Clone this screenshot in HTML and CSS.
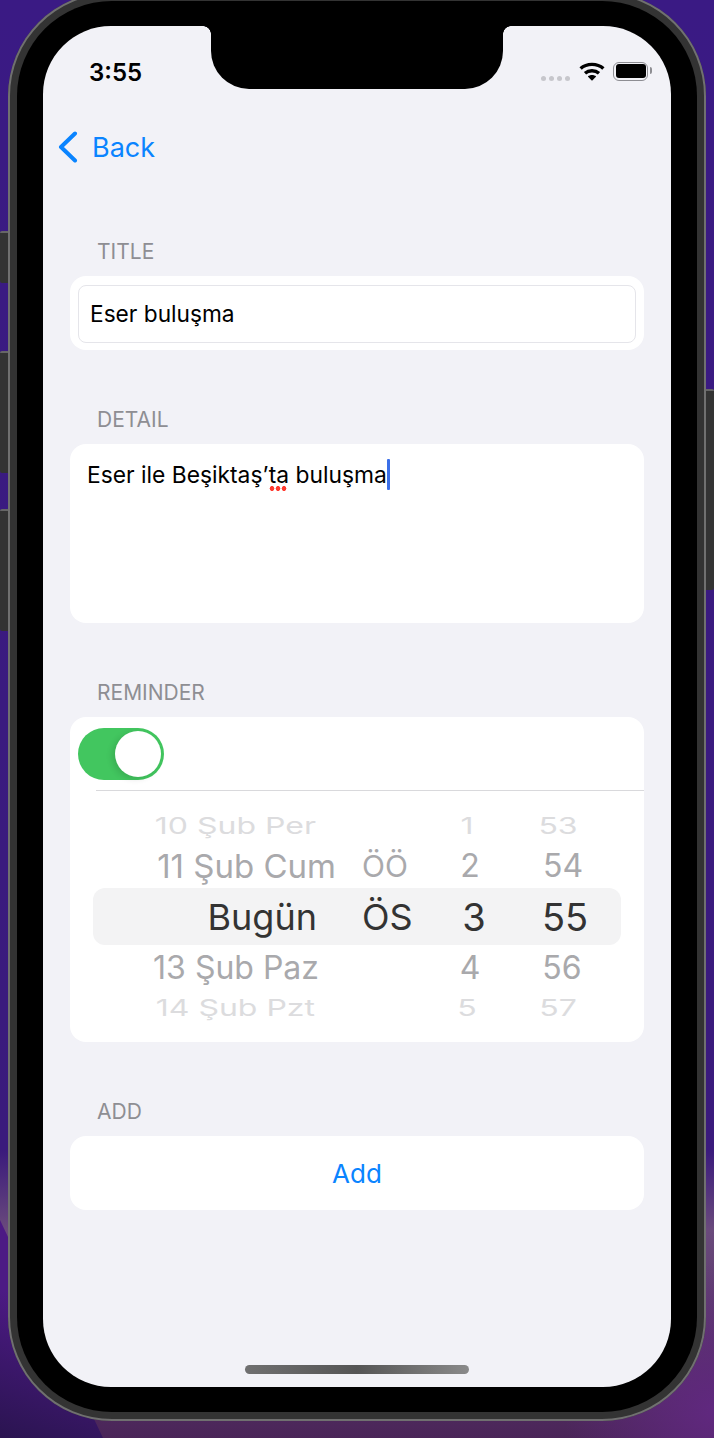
FILE: index.html
```html
<!DOCTYPE html>
<html lang="en">
<head>
    <meta charset="UTF-8">
    <meta name="viewport" content="width=device-width, initial-scale=1.0">
    <title>Add Reminder</title>
    <link rel="stylesheet" href="styles.css">
</head>
<body>
    <div class="phone">
        <span class="side-btn side-btn-mute"></span>
        <span class="side-btn side-btn-up"></span>
        <span class="side-btn side-btn-down"></span>
        <span class="side-btn side-btn-power"></span>
        <div class="bezel">
            <div class="screen">
                <div class="notch"></div>

                <div class="status">
                    <span class="time">3:55</span>
                    <div class="status-icons">
                        <span class="cell"><i></i><i></i><i></i><i></i></span>
                        <svg class="wifi" width="26" height="19" viewBox="0 0 26 19">
                            <path d="M1.6 6.6C7.8 1 18.2 1 24.4 6.6" fill="none" stroke="#000" stroke-width="3.4"/>
                            <path d="M6 11.2C9.8 7.9 16.2 7.9 20 11.2" fill="none" stroke="#000" stroke-width="3.4"/>
                            <path d="M8.8 14.4C11 12.4 15 12.4 17.2 14.4L13 18.8Z" fill="#000"/>
                        </svg>
                        <span class="battery"><i></i></span>
                    </div>
                </div>

                <div class="nav">
                    <svg class="chevron" width="20" height="32" viewBox="0 0 20 32">
                        <path d="M17 2.5L3 16L17 29.5" fill="none" stroke="#0a84ff" stroke-width="4" stroke-linecap="round" stroke-linejoin="round"/>
                    </svg>
                    <span class="back">Back</span>
                </div>

                <div class="form">
                    <div class="section">
                        <div class="label">TITLE</div>
                        <div class="card card-title">
                            <div class="input">Eser buluşma</div>
                        </div>
                    </div>

                    <div class="section">
                        <div class="label">DETAIL</div>
                        <div class="card card-detail">
                            <span class="detail-text">Eser ile Beşiktaş’<span class="misspelled">ta</span> buluşma</span><span class="caret"></span>
                        </div>
                    </div>

                    <div class="section">
                        <div class="label">REMINDER</div>
                        <div class="card card-reminder">
                            <div class="toggle"><span class="thumb"></span></div>
                            <div class="separator"></div>
                            <div class="picker">
                                <div class="picker-band"></div>
                                <div class="row row-far row-top"><span class="c-date">10 Şub Per</span><span class="c-ampm"></span><span class="c-hour">1</span><span class="c-min">53</span></div>
                                <div class="row row-near row-above"><span class="c-date">11 Şub Cum</span><span class="c-ampm">ÖÖ</span><span class="c-hour">2</span><span class="c-min">54</span></div>
                                <div class="row row-selected"><span class="c-date">Bugün</span><span class="c-ampm">ÖS</span><span class="c-hour">3</span><span class="c-min">55</span></div>
                                <div class="row row-near row-below"><span class="c-date">13 Şub Paz</span><span class="c-ampm"></span><span class="c-hour">4</span><span class="c-min">56</span></div>
                                <div class="row row-far row-bottom"><span class="c-date">14 Şub Pzt</span><span class="c-ampm"></span><span class="c-hour">5</span><span class="c-min">57</span></div>
                            </div>
                        </div>
                    </div>

                    <div class="section">
                        <div class="label">ADD</div>
                        <div class="card card-add">Add</div>
                    </div>
                </div>

                <div class="home-indicator"></div>
            </div>
        </div>
    </div>
</body>
</html>
```

FILE: styles.css
```css
html, body {
    margin: 0;
    height: 1438px;
    overflow: hidden;
}
body {
    font-family: Inter, "Liberation Sans", sans-serif;
    position: relative;
    background:
        radial-gradient(circle at 714px 1410px, #60287f 0, rgba(96, 40, 127, 0) 150px),
        linear-gradient(180deg, #3a1a84 0, #3a1a7c 1150px, #6a4a7c 1230px, #4a2558 1438px);
}
/* darker wallpaper wedge in the bottom left corner */
body::before {
    content: "";
    position: absolute;
    inset: 0;
    background: linear-gradient(20deg, #2a1450 0, #4c1a84 140px, #4c1a84 100%);
    clip-path: polygon(0 1220px, 103px 1438px, 0 1438px);
}

.phone {
    position: relative;
    box-sizing: border-box;
    width: 698px;
    height: 1429px;
    margin: -8px 0 0 8px;
    padding: 9px;
    border-radius: 104px;
    background: #333;
    box-shadow: inset 0 0 0 2px #707070;
}
.side-btn {
    position: absolute;
    left: -8px;
    width: 8px;
    background: #333;
    border-top: 2px solid #666;
    border-radius: 2px 0 0 2px;
    box-sizing: border-box;
}
.side-btn-mute { top: 239px; height: 52px; }
.side-btn-up { top: 359px; height: 122px; }
.side-btn-down { top: 517px; height: 122px; }
.side-btn-power {
    left: auto;
    right: -8px;
    top: 397px;
    height: 201px;
    border-radius: 0 2px 2px 0;
}

.bezel {
    box-sizing: border-box;
    height: 100%;
    padding: 25px 26px;
    background: #000;
    border-radius: 95px;
}
.screen {
    position: relative;
    display: flex;
    flex-direction: column;
    height: 100%;
    background: #f2f2f7;
    border-radius: 68px;
    overflow: hidden;
}
.notch {
    position: absolute;
    top: 0;
    left: 168px;
    width: 292px;
    height: 63px;
    background: #000;
    border-radius: 0 0 38px 38px;
}
.notch::before, .notch::after {
    content: "";
    position: absolute;
    top: 0;
    width: 8px;
    height: 8px;
}
.notch::before {
    left: -8px;
    background: radial-gradient(circle at 0 100%, transparent 7.5px, #000 8px);
}
.notch::after {
    right: -8px;
    background: radial-gradient(circle at 100% 100%, transparent 7.5px, #000 8px);
}

.status {
    display: flex;
    justify-content: space-between;
    align-items: center;
    height: 90px;
    padding: 2px 23px 0 46px;
    box-sizing: border-box;
    flex: none;
}
.time {
    font-size: 24px;
    font-weight: 600;
    color: #000;
}
.status-icons {
    display: flex;
    align-items: center;
    margin-top: -2px;
}
.cell {
    display: flex;
    gap: 3px;
    margin: 14px 9px 0 0;
}
.cell i {
    width: 5px;
    height: 5px;
    border-radius: 50%;
    background: #c7c7cc;
}
.wifi { display: block; }
.battery {
    position: relative;
    box-sizing: border-box;
    width: 35px;
    height: 19px;
    margin-left: 8px;
    padding: 1.5px;
    border: 1.5px solid #8e8e93;
    border-radius: 6px;
}
.battery i {
    display: block;
    height: 100%;
    background: #000;
    border-radius: 3px;
}
.battery::after {
    content: "";
    position: absolute;
    top: 4px;
    right: -5px;
    width: 2px;
    height: 7px;
    background: #8e8e93;
    border-radius: 0 2px 2px 0;
}

.nav {
    display: flex;
    align-items: center;
    gap: 14px;
    height: 62px;
    padding-left: 15px;
    flex: none;
}
.chevron { display: block; }
.back {
    font-size: 27px;
    color: #0a84ff;
}

.form {
    padding: 62px 27px 0;
    flex: none;
}
.section { margin-bottom: 58px; }
.label {
    height: 24px;
    line-height: 24px;
    margin: 0 0 12px 27px;
    font-size: 21px;
    color: #8e8e93;
}
.card {
    background: #fff;
    border-radius: 16px;
}

.card-title {
    box-sizing: border-box;
    height: 74px;
    padding: 9px 8px;
}
.input {
    box-sizing: border-box;
    height: 58px;
    line-height: 56px;
    padding-left: 11px;
    font-size: 22.7px;
    color: #000;
    border: 1px solid #e5e5ea;
    border-radius: 8px;
}

.card-detail {
    box-sizing: border-box;
    height: 179px;
    padding: 15px 0 0 17px;
    font-size: 22.8px;
    line-height: 32px;
    color: #000;
    display: flex;
    align-items: flex-start;
}
.misspelled {
    position: relative;
}
.misspelled::after {
    content: "";
    position: absolute;
    left: 0;
    width: 18px;
    bottom: -3px;
    height: 5px;
    background: radial-gradient(circle at center, #ff3b30 2.3px, transparent 2.6px) 0 0 / 6px 5px repeat-x;
}
.caret {
    width: 3px;
    height: 31px;
    background: #3b6fe8;
    border-radius: 1px;
}

.card-reminder {
    box-sizing: border-box;
    height: 325px;
    padding-top: 11px;
}
.toggle {
    box-sizing: border-box;
    width: 86px;
    height: 52px;
    margin-left: 8px;
    padding: 3px;
    display: flex;
    justify-content: flex-end;
    background: #42c65f;
    border-radius: 26px;
}
.thumb {
    width: 46px;
    height: 46px;
    background: #fff;
    border-radius: 50%;
    box-shadow: -3px 2px 6px rgba(0, 0, 0, 0.12);
}
.separator {
    height: 1px;
    margin: 10px 0 0 26px;
    background: #d9d9dc;
}

.picker {
    position: relative;
    padding-top: 14px;
}
.picker-band {
    position: absolute;
    left: 23px;
    right: 23px;
    top: 97px;
    height: 57px;
    background: #f3f3f4;
    border-radius: 12px;
}
.row {
    position: relative;
    display: grid;
    grid-template-columns: 266px 91px 86px 100px;
    align-items: center;
    text-align: center;
    font-size: 32px;
    line-height: 30px;
}
.c-date { text-align: right; }
.c-ampm { text-align: left; padding-left: 26px; }

.row-far {
    color: #dcdcde;
    transform: scaleY(0.72);
}
.row-near { color: #a9a9ac; }
.row-top { height: 42px; }
.row-above { height: 37px; }
.row-selected {
    height: 66px;
    font-size: 36px;
    color: #333;
}
.row-below { height: 36px; }
.row-bottom { height: 44px; }

.row-above .c-date { font-size: 33px; }
.row-above .c-ampm { font-size: 30px; }
.row-top .c-date { padding-right: 20px; }
.row-top .c-hour { padding-right: 6px; }
.row-top .c-min { padding-right: 10px; }
.row-selected .c-date { padding-right: 19px; }
.row-selected .c-hour { padding-left: 8px; font-size: 38px; }
.row-selected .c-min { padding-left: 4px; font-size: 38px; }
.row-below .c-date { padding-right: 17px; }
.row-below .c-min { padding-right: 2px; }
.row-bottom .c-date { padding-right: 21px; }
.row-bottom .c-hour { padding-right: 6px; }
.row-bottom .c-min { padding-right: 10px; }

.card-add {
    height: 74px;
    line-height: 76px;
    text-align: center;
    font-size: 26px;
    color: #0a84ff;
}

.home-indicator {
    width: 224px;
    height: 9px;
    margin: auto auto 13px;
    background: linear-gradient(90deg, #707070, #555 50%, #8a8a8a);
    border-radius: 5px;
    flex: none;
}
```
